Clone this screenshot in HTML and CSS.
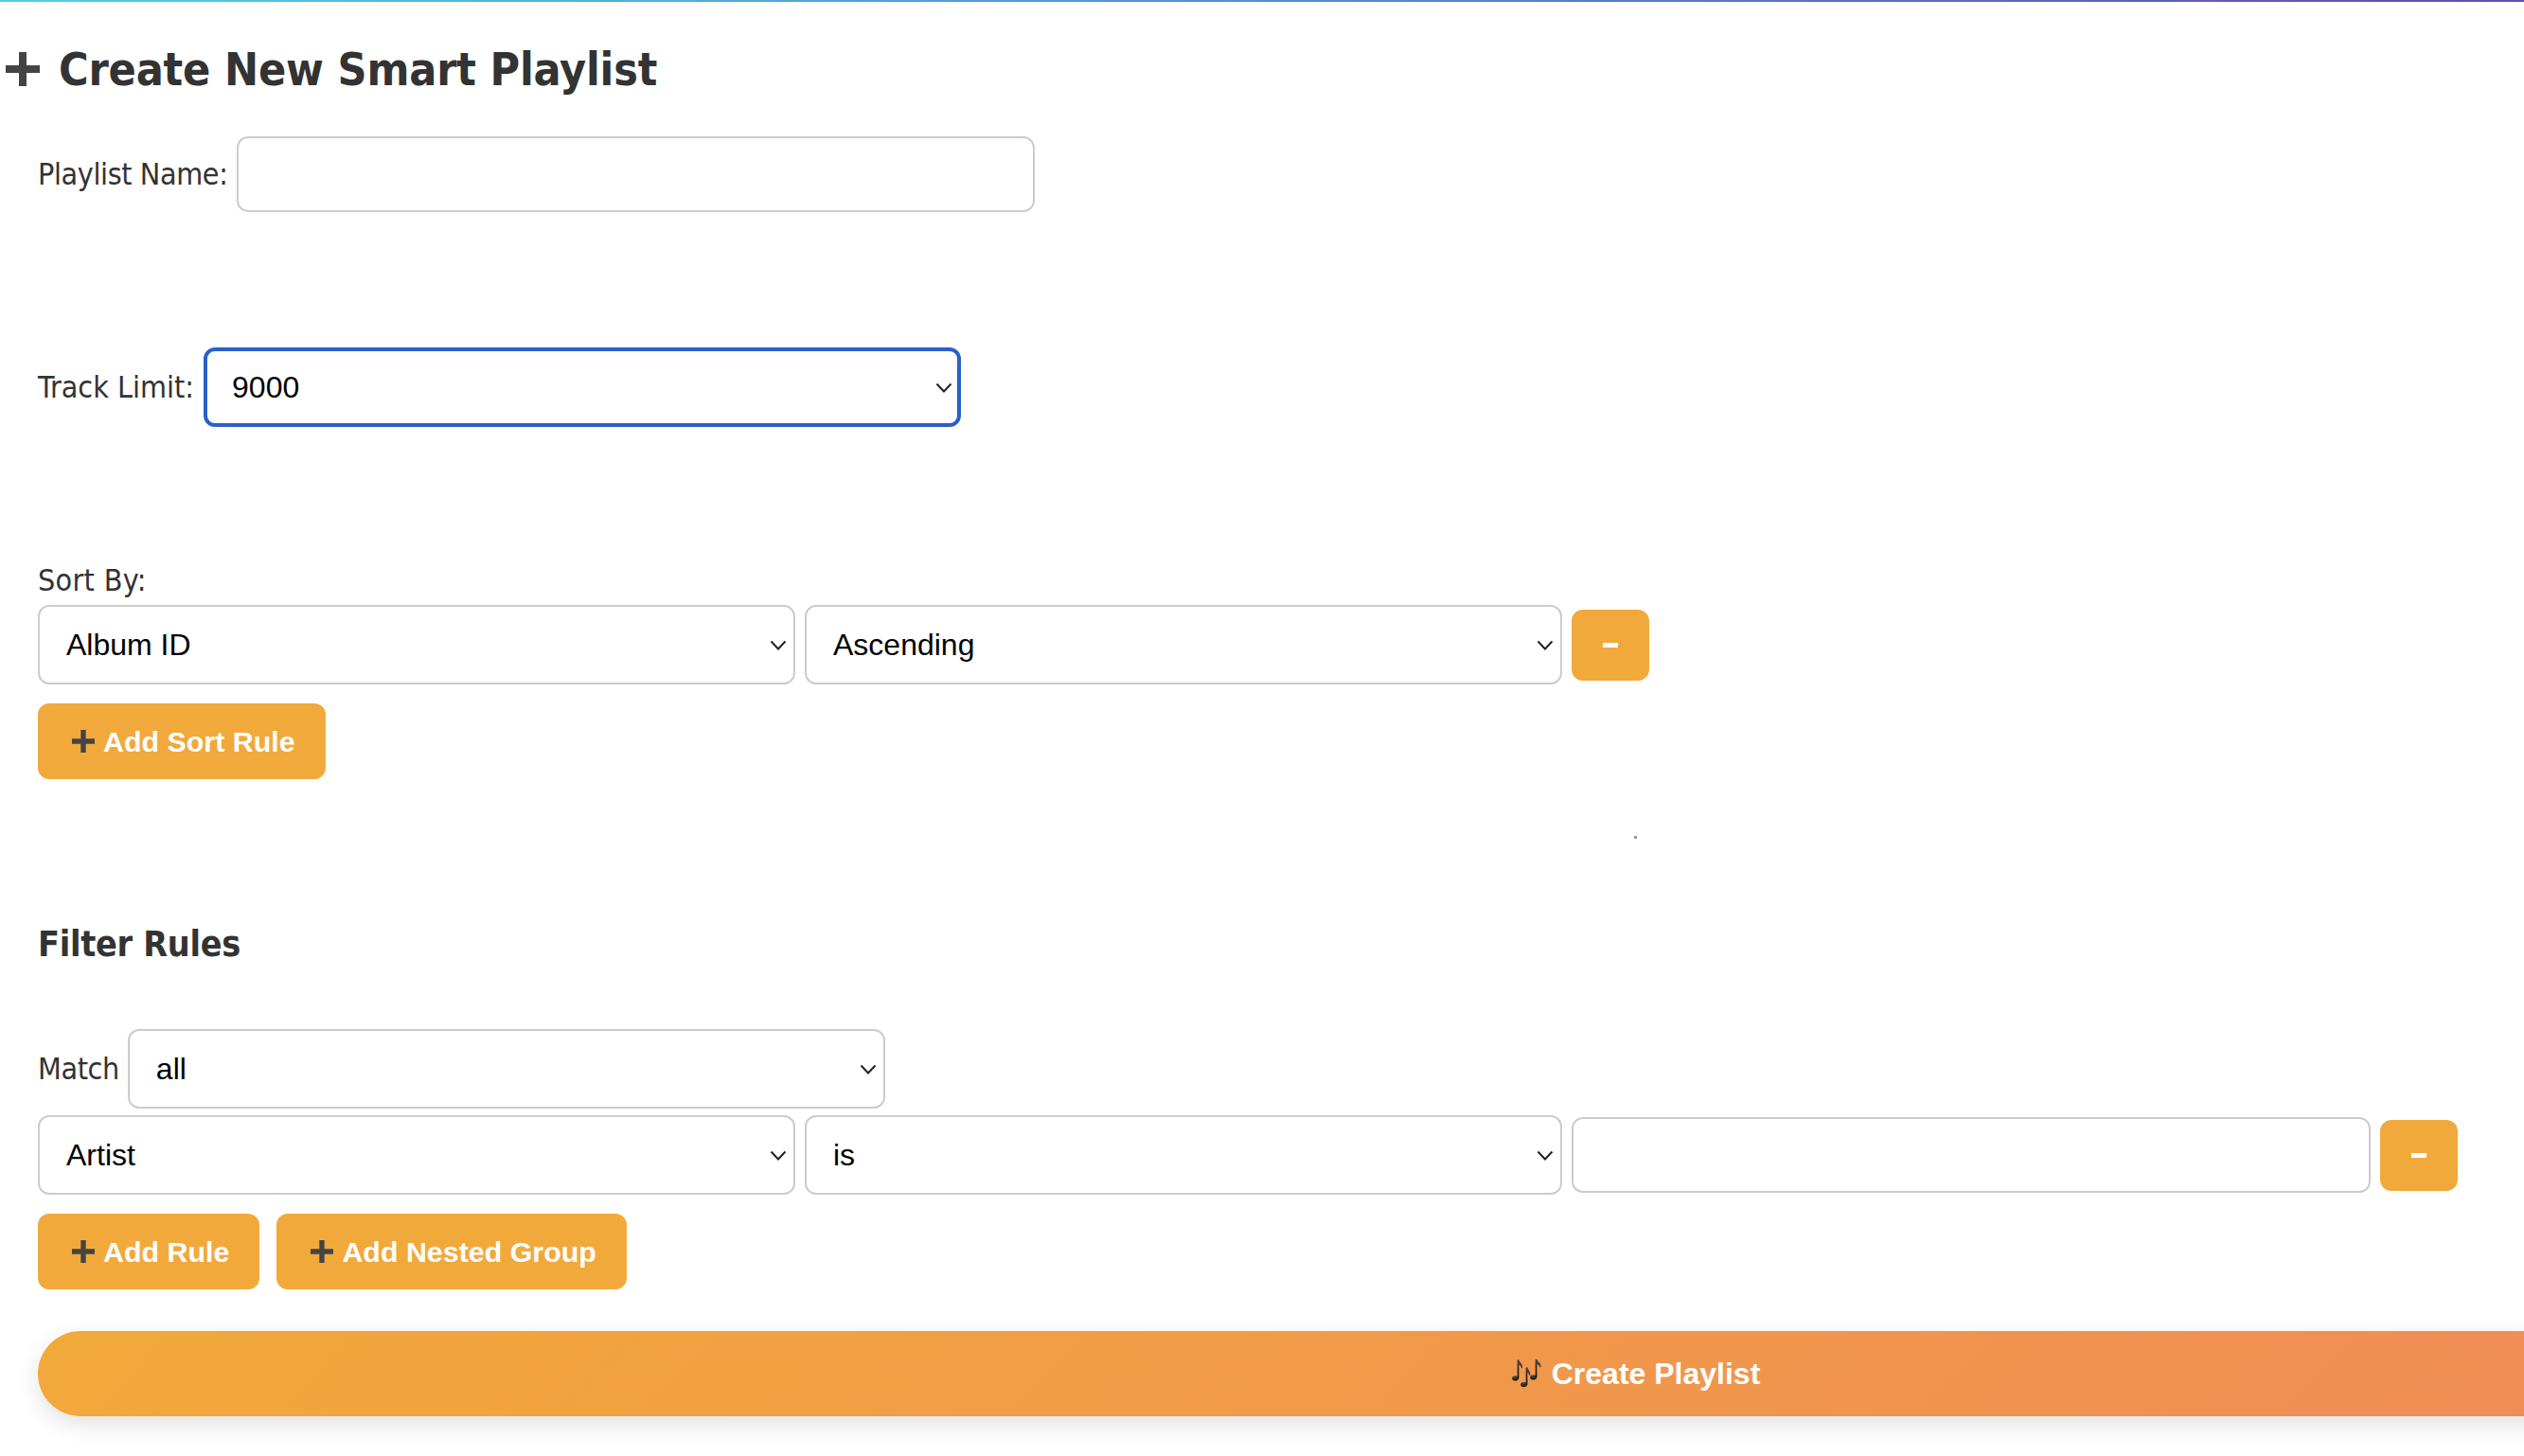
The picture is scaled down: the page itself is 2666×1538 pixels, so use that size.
FILE: index.html
```html
<!DOCTYPE html>
<html lang="en">
<head>
    <meta charset="UTF-8">
    <meta name="viewport" content="width=device-width, initial-scale=1.0">
    <title>Create New Smart Playlist</title>
    <link rel="stylesheet" href="styles.css">
</head>
<body>

    <!-- Top accent line -->
    <div class="top-line"></div>

    <h2 class="page-title">
        <svg class="plus-icon plus-large" viewBox="0 0 36 36"><path d="M14 0h8v14h14v8H22v14h-8V22H0v-8h14z"/></svg>
        Create New Smart Playlist
    </h2>

    <form class="playlist-form">
        <div class="form-row name-row">
            <label for="playlistName">Playlist Name:</label>
            <input type="text" id="playlistName" class="field name-field">
        </div>

        <div class="form-row limit-row">
            <label for="trackLimit">Track Limit:</label>
            <select id="trackLimit" class="field select-field focused">
                <option>9000</option>
            </select>
        </div>

        <!-- Sort rules -->
        <label class="sort-label">Sort By:</label>
        <div class="rule-row">
            <select class="field select-field"><option>Album ID</option></select>
            <select class="field select-field"><option>Ascending</option></select>
            <button type="button" class="btn btn-remove" aria-label="Remove"><span class="minus-bar"></span></button>
        </div>
        <div class="button-row">
            <button type="button" class="btn">
                <svg class="plus-icon" viewBox="0 0 36 36"><path d="M14 0h8v14h14v8H22v14h-8V22H0v-8h14z"/></svg>
                Add Sort Rule
            </button>
        </div>
        <div class="speck"></div>

        <!-- Filter rules -->
        <h3 class="filter-title">Filter Rules</h3>
        <div class="form-row match-row">
            <label>Match</label>
            <select class="field select-field"><option>all</option></select>
        </div>
        <div class="rule-row filter-row">
            <select class="field select-field"><option>Artist</option></select>
            <select class="field select-field"><option>is</option></select>
            <input type="text" class="field value-field">
            <button type="button" class="btn btn-remove" aria-label="Remove"><span class="minus-bar"></span></button>
        </div>
        <div class="button-row">
            <button type="button" class="btn">
                <svg class="plus-icon" viewBox="0 0 36 36"><path d="M14 0h8v14h14v8H22v14h-8V22H0v-8h14z"/></svg>
                Add Rule
            </button>
            <button type="button" class="btn">
                <svg class="plus-icon" viewBox="0 0 36 36"><path d="M14 0h8v14h14v8H22v14h-8V22H0v-8h14z"/></svg>
                Add Nested Group
            </button>
        </div>

        <button type="submit" class="create-button">
            <svg class="notes-icon" viewBox="0 0 32 30">
                <defs>
                    <linearGradient id="noteFill" x1="0" y1="0" x2="0" y2="1">
                        <stop offset="0" stop-color="#55534f"/>
                        <stop offset="1" stop-color="#0e1117"/>
                    </linearGradient>
                </defs>
                <g fill="url(#noteFill)" stroke="#14171d" stroke-width="0.5">
                    <ellipse cx="3.6" cy="20" rx="3.2" ry="2.3"/>
                    <path d="M6 20V1l1.1-.5c.3 2.6 4.3 4 3.4 8.6-.6-2.4-2-3.4-3.4-4V20z"/>
                    <ellipse cx="12.6" cy="26.6" rx="3.2" ry="2.3"/>
                    <path d="M15 26.6V9l1.1-.5c.3 2.6 3.4 4 2.6 8.4-.5-2.2-1.4-3-2.6-3.8v13.5z"/>
                    <ellipse cx="22.6" cy="19" rx="3.2" ry="2.3"/>
                    <path d="M25 19V0l1.1-.2c.3 2.6 4.6 3.6 4 8.4-.8-2.4-2.6-3-4-3.6V19z"/>
                </g>
            </svg>
            Create Playlist
        </button>
    </form>

</body>
</html>
```

FILE: styles.css
```css
/* Page */
html, body {
    overflow: hidden;
}

body {
    margin: 0;
    height: 1538px;
    background-color: #fff;
    color: #333;
    font-family: 'DejaVu Sans Condensed', 'DejaVu Sans', sans-serif;
    font-stretch: condensed;
    font-size: 32px;
    letter-spacing: -0.4px;
}

.top-line {
    height: 2px;
    background: linear-gradient(90deg, #4dd0e1, #5e4fae);
}

.page-title {
    display: flex;
    align-items: center;
    gap: 20px;
    margin: 0;
    padding: 0 0 0 6px;
    height: 142px;
    font-size: 48px;
    font-weight: bold;
    letter-spacing: -0.2px;
}

.plus-icon {
    width: 24px;
    height: 24px;
    flex: none;
    fill: #444;
}

.plus-large {
    width: 36px;
    height: 36px;
}

/* Form */
.playlist-form {
    padding-left: 40px;
}

.form-row {
    display: flex;
    align-items: center;
    gap: 9px;
}

.limit-row {
    margin-top: 143px;
    gap: 10px;
    letter-spacing: 0;
}

.field {
    box-sizing: border-box;
    border: 2px solid #ccc;
    border-radius: 12px;
    background-color: #fff;
    color: #000;
    font-family: 'Liberation Sans', Arial, sans-serif;
    font-size: 32px;
    letter-spacing: 0;
}

.name-field {
    width: 843px;
    height: 80px;
}

.select-field {
    width: 800px;
    height: 84px;
    padding: 0 28px;
    appearance: none;
    -webkit-appearance: none;
    background-image: url("data:image/svg+xml,%3Csvg xmlns='http://www.w3.org/2000/svg' width='18' height='11'%3E%3Cpath d='M1.5 1.5L9 9.5l7.5-8' fill='none' stroke='%23222' stroke-width='2'/%3E%3C/svg%3E");
    background-repeat: no-repeat;
    background-position: right 7px center;
}

.focused {
    border: 4px solid #2a60c8;
    padding: 0 26px;
    background-position: right 5px center;
}

.sort-label {
    display: block;
    margin-top: 143px;
    margin-bottom: 7px;
    line-height: 38px;
    letter-spacing: 0.3px;
}

.rule-row {
    display: flex;
    align-items: center;
    gap: 10px;
}

.value-field {
    width: 844px;
    height: 80px;
}

/* Buttons */
.btn {
    display: inline-flex;
    align-items: center;
    justify-content: center;
    gap: 9px;
    height: 80px;
    padding: 0 32px 0 36px;
    border: none;
    border-radius: 12px;
    background-color: #f2a93c;
    color: #fff;
    font-family: 'Liberation Sans', Arial, sans-serif;
    font-size: 30.4px;
    font-weight: bold;
    letter-spacing: 0;
}

.btn-remove {
    width: 82px;
    height: 75px;
    padding: 0;
}

.minus-bar {
    width: 16px;
    height: 5px;
    background-color: #fff;
}

.button-row {
    display: flex;
    gap: 18px;
    margin-top: 20px;
}

.speck {
    width: 3px;
    height: 3px;
    margin: 60px 0 0 1686px;
    background-color: #999;
}

.filter-title {
    margin: 87px 0 0;
    height: 114px;
    line-height: 48px;
    font-size: 37.44px;
    font-weight: bold;
    letter-spacing: -0.3px;
}

.filter-row {
    margin-top: 7px;
}

/* Submit */
.create-button {
    display: flex;
    align-items: center;
    justify-content: center;
    gap: 10px;
    width: 3376px;
    height: 90px;
    margin-top: 44px;
    border: none;
    border-radius: 45px;
    background: linear-gradient(135deg, #f2a93a, #ef855d);
    box-shadow: 0 8px 24px rgba(0, 0, 0, 0.12);
    color: #fff;
    font-family: 'Liberation Sans', Arial, sans-serif;
    font-size: 32px;
    font-weight: bold;
    letter-spacing: 0;
}

.notes-icon {
    width: 32px;
    height: 30px;
    flex: none;
}
```
